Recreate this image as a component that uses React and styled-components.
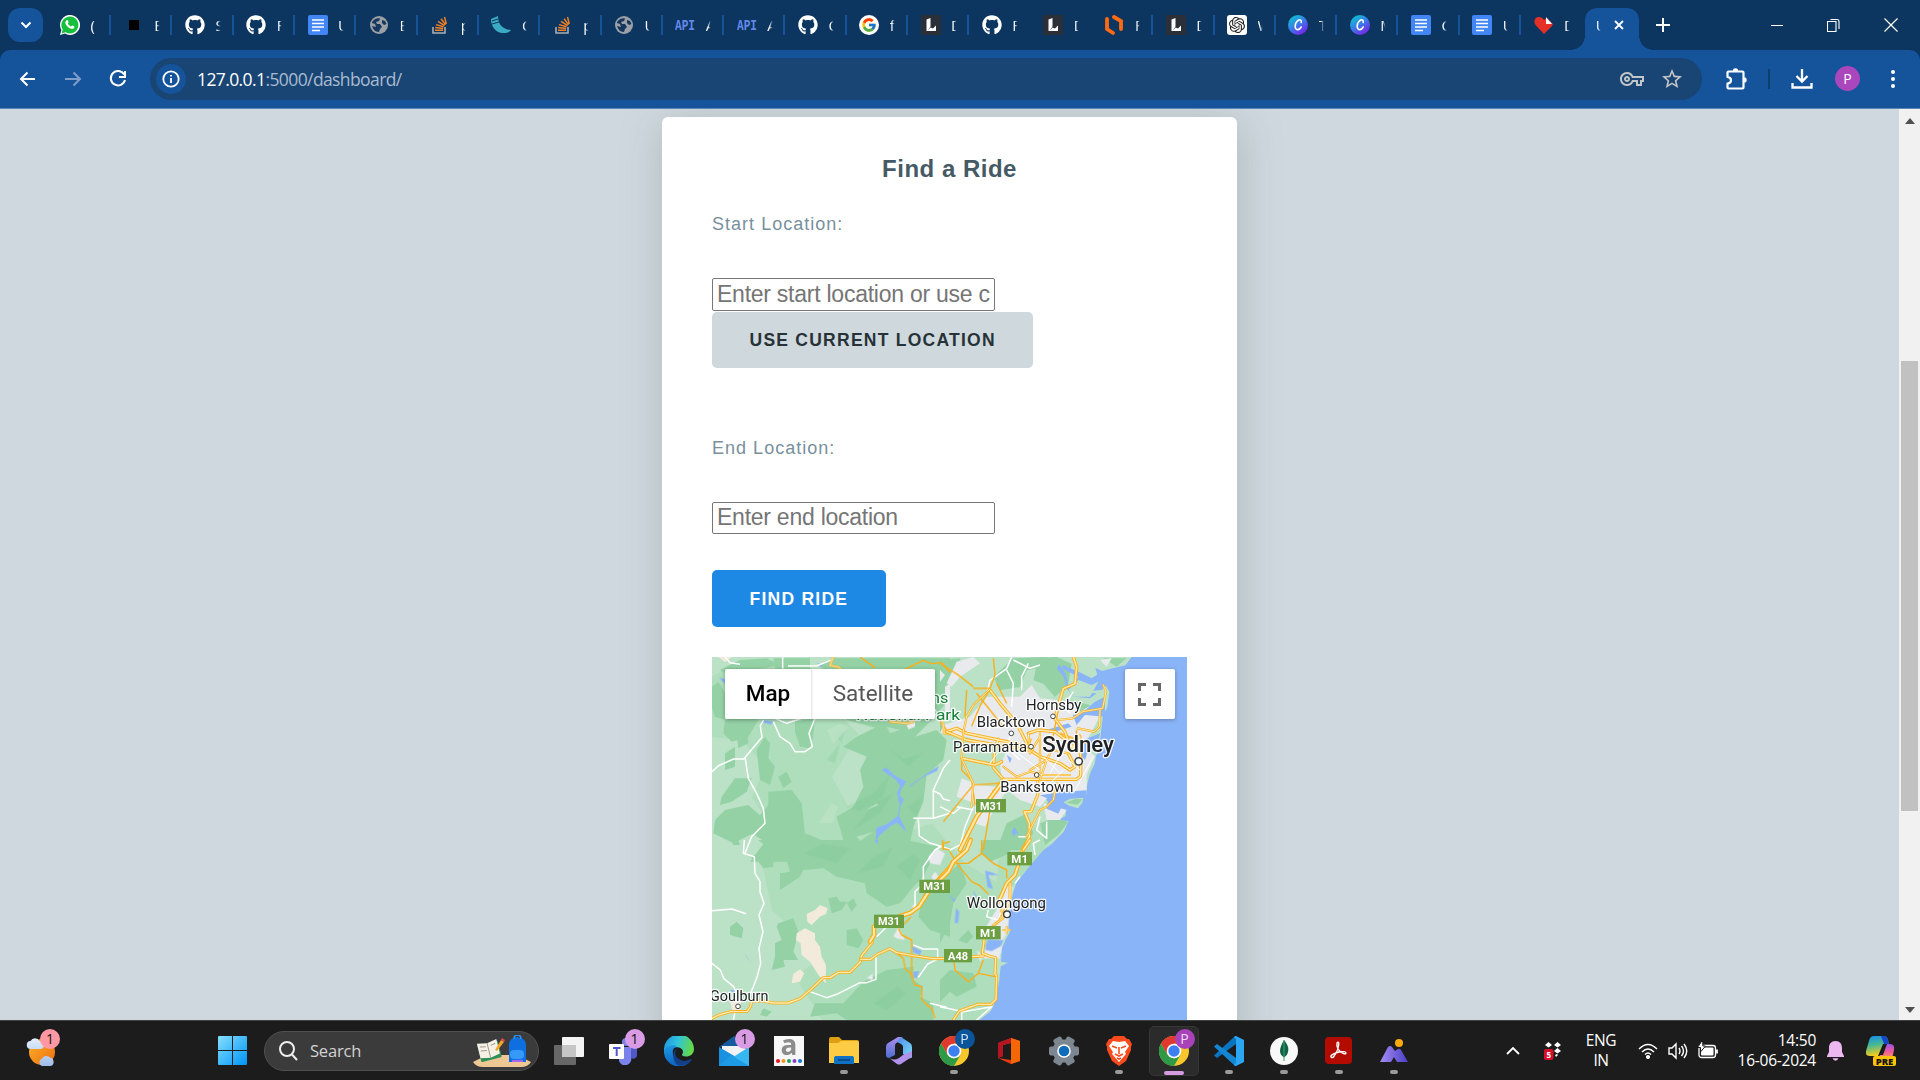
import React from 'react';
import styled, { createGlobalStyle, css } from 'styled-components';
import { FaGithub } from 'react-icons/fa';
import { FcGoogle } from 'react-icons/fc';
import { SiOpenai } from 'react-icons/si';
import { MdStarOutline, MdOutlineVpnKey } from 'react-icons/md';

const ui = '"Open Sans", "Noto Sans", sans-serif';
const arial = '"Liberation Sans", Arial, sans-serif';

const Global = createGlobalStyle`
  * { box-sizing: border-box; }
  body { margin: 0; overflow: hidden; background: #cfd8df; }
  svg { display: block; flex: none; }
`;

const Screen = styled.div`
  width: 1920px;
  height: 1080px;
  display: flex;
  flex-direction: column;
  overflow: hidden;
  font-family: ${ui};
`;

/* ---------- browser ---------- */
const TabStrip = styled.header`
  height: 50px;
  flex: none;
  display: flex;
  align-items: center;
  padding-left: 8px;
  background: #0c3560;
`;
const TabSearch = styled.div`
  width: 35px;
  height: 34px;
  border-radius: 12px;
  background: #15539b;
  display: grid;
  place-items: center;
  margin-right: 5px;
`;
const Tab = styled.div`
  width: 61.3px;
  height: 20px;
  flex: none;
  display: flex;
  align-items: center;
  gap: 10.5px;
  padding-left: 12.5px;
  border-right: 2px solid ${(p) => (p.$bare ? 'transparent' : '#15539b')};
  &:nth-child(2) { width: 63.2px; padding-left: 11.5px; gap: 11px; }
`;
const Favicon = styled.span`
  width: 20px;
  height: 20px;
  flex: none;
  display: grid;
  place-items: center;
`;
const TabTitle = styled.span`
  width: 5.5px;
  overflow: hidden;
  color: #fff;
  font-size: 15px;
  line-height: 24px;
  mask-image: linear-gradient(90deg, #000 40%, transparent 95%);
`;
const ActiveTab = styled.div`
  width: 54px;
  height: 42px;
  margin: 8px 0 0 2.5px;
  flex: none;
  display: flex;
  align-items: center;
  gap: 12.5px;
  padding: 0 0 8px 11px;
  border-radius: 12px 12px 0 0;
  background: #15539b;
  position: relative;
  &::before, &::after {
    content: '';
    position: absolute;
    bottom: 0;
    width: 14px;
    height: 14px;
  }
  &::before { left: -14px; background: radial-gradient(circle at 0 0, transparent 13.5px, #15539b 14px); }
  &::after { right: -14px; background: radial-gradient(circle at 100% 0, transparent 13.5px, #15539b 14px); }
`;
const NewTab = styled.div`
  margin-left: 17px;
  flex: 1;
`;
const WindowButtons = styled.div`
  display: flex;
  width: 172px;
  padding: 0 22px 0 22px;
  justify-content: space-between;
  align-items: center;
`;
const ToolbarBack = styled.div`
  flex: none;
  background: #0c3560;
`;
const Toolbar = styled.div`
  height: 59px;
  display: flex;
  align-items: center;
  padding: 0 16px 1px 16px;
  background: #15539b;
  border-radius: 10px 10px 0 0;
  border-bottom: 1px solid #5c86b8;
  color: #fff;
`;
const NavButtons = styled.div`
  display: flex;
  gap: 21px;
  width: 134px;
`;
const AddressBar = styled.div`
  width: 1552px;
  height: 42px;
  border-radius: 21px;
  background: #194574;
  display: flex;
  align-items: center;
  padding: 0 18px 0 6px;
`;
const InfoBadge = styled.div`
  width: 30px;
  height: 30px;
  border-radius: 50%;
  background: #15539b;
  display: grid;
  place-items: center;
  margin-right: 11px;
`;
const Url = styled.div`
  flex: 1;
  font-size: 17.5px;
  letter-spacing: -0.6px;
  color: #a9bbd0;
  b { font-weight: 400; color: #fff; }
`;
const AddressActions = styled.div`
  display: flex;
  align-items: center;
  gap: 16px;
  color: #c3c5c7;
`;
const ToolbarActions = styled.div`
  flex: 1;
  display: flex;
  align-items: center;
  padding-left: 24px;
`;
const Rule = styled.span`
  width: 2px;
  height: 20px;
  background: #0e3d70;
  margin: 0 21px 0 20px;
`;
const Avatar = styled.span`
  width: 25px;
  height: 25px;
  border-radius: 50%;
  background: #ab47bc;
  color: #fff;
  font-size: 14px;
  display: grid;
  place-items: center;
  margin: 0 31px 0 22px;
`;

/* ---------- page ---------- */
const Viewport = styled.div`
  flex: 1;
  min-height: 0;
  display: flex;
  overflow: hidden;
`;
const Page = styled.main`
  flex: 1;
  background: #cfd8df;
  display: flex;
  justify-content: center;
  padding-top: 8px;
  overflow: hidden;
`;
const Card = styled.section`
  width: 575px;
  height: 1100px;
  padding: 32px 50px;
  background: #fff;
  border-radius: 6px;
  box-shadow: 2px 6px 42px rgba(119, 130, 119, 0.36);
  font-family: ${arial};
  display: flex;
  flex-direction: column;
  align-items: flex-start;
`;
const Heading = styled.h2`
  align-self: stretch;
  margin: 0;
  text-align: center;
  font-size: 24px;
  line-height: 40px;
  letter-spacing: 0.5px;
  color: #455a64;
`;
const Label = styled.label`
  margin-top: ${(p) => p.$top}px;
  font-size: 18px;
  line-height: 24px;
  letter-spacing: 1.02px;
  color: #78909c;
`;
const Field = styled.input`
  margin: 42px 0 0;
  width: 283px;
  height: ${(p) => p.$h}px;
  padding: 0 3px 1px 4px;
  border: 1px solid #767676;
  border-radius: 2px;
  font-family: ${arial};
  font-size: 23px;
  letter-spacing: -0.25px;
  background: #fff;
  &::placeholder { color: #757575; }
`;
const Button = styled.button`
  margin: ${(p) => p.$top}px 0 0;
  padding: ${(p) => (p.$primary ? 1 : 0)}px 37.5px 0;
  width: ${(p) => p.$w}px;
  height: ${(p) => p.$h}px;
  border: 0;
  border-radius: 5px;
  font: 700 17.5px ${arial};
  letter-spacing: 1.25px;
  text-align: left;
  white-space: nowrap;
  ${(p) => p.$primary
    ? css`background: #1e88e5; color: #fff;`
    : css`background: #cfd8dc; color: #263238;`}
`;
const MapBox = styled.div`
  position: relative;
  margin-top: 30px;
  width: 475px;
  height: 500px;
  background: #8ab4f8;
  overflow: hidden;
  font-family: Roboto, sans-serif;
`;
const MapControls = styled.div`
  position: absolute;
  inset: 12px 12px auto 13px;
  display: flex;
  justify-content: space-between;
`;
const MapTypes = styled.div`
  display: flex;
  height: 50px;
  width: 210px;
  background: #fff;
  border-radius: 2px;
  box-shadow: 0 1px 4px rgba(0, 0, 0, 0.3);
`;
const MapType = styled.div`
  width: ${(p) => p.$w}px;
  font-size: 22.5px;
  line-height: 48px;
  text-align: center;
  font-weight: ${(p) => (p.$on ? 500 : 400)};
  color: ${(p) => (p.$on ? '#000' : '#565656')};
  box-shadow: ${(p) => (p.$on ? '1px 0 2px rgba(0,0,0,.13)' : 'none')};
`;
const Fullscreen = styled.div`
  width: 50px;
  height: 50px;
  background: #fff;
  border-radius: 2px;
  box-shadow: 0 1px 4px rgba(0, 0, 0, 0.3);
  display: grid;
  place-items: center;
`;
const Scrollbar = styled.div`
  width: 21px;
  background: #f1f1f1;
  display: flex;
  flex-direction: column;
  align-items: center;
  padding: 9px 0 7px;
`;
const Thumb = styled.div`
  width: 17px;
  height: 450px;
  margin: 237px 0 auto;
  background: #c1c1c1;
`;

/* ---------- taskbar ---------- */
const Taskbar = styled.footer`
  height: 60px;
  flex: none;
  display: flex;
  align-items: center;
  background: #1c1c1c;
  border-top: 1px solid #3f4242;
  color: #fff;
`;
const AppSlot = styled.div`
  width: 55px;
  height: 59px;
  flex: none;
  display: grid;
  place-items: center;
  position: relative;
  &::after {
    content: '';
    position: absolute;
    bottom: ${(p) => (p.$active ? 5 : 6)}px;
    left: 50%;
    transform: translateX(-50%);
    height: 4px;
    border-radius: 2px;
    width: ${(p) => (p.$active ? 20 : p.$open ? 8 : 0)}px;
    background: ${(p) => (p.$active ? '#d59be0' : '#9a9a9a')};
  }
`;
const Weather = styled(AppSlot)`
  width: 205px;
  place-items: center start;
  padding-left: 25px;
`;
const Plate = styled.div`
  width: 50px;
  height: 50px;
  border-radius: 5px;
  display: grid;
  place-items: center;
  ${(p) => p.$on && css`background: #2b2b2b; border: 1px solid #363636;`}
`;
const Badge = styled.span`
  position: absolute;
  left: ${(p) => p.$x}px;
  top: 8px;
  width: 20px;
  height: 20px;
  border-radius: 50%;
  background: ${(p) => p.$bg};
  color: ${(p) => p.$fg || '#111'};
  font-size: 14px;
  line-height: 20px;
  text-align: center;
`;
const Search = styled.div`
  width: 275px;
  height: 40px;
  margin: 0 2px 0 4px;
  border-radius: 20px;
  border: 1px solid #505050;
  background: #3b3b3b;
  display: flex;
  align-items: center;
  padding: 0 7px 0 14px;
  gap: 12px;
  font-size: 16.5px;
  letter-spacing: -0.2px;
  color: #d2d2d2;
  span { flex: 1; }
`;
const Tray = styled.div`
  margin-left: auto;
  width: 416px;
  height: 59px;
  display: flex;
  align-items: center;
`;
const TrayItem = styled.div`
  margin-left: ${(p) => p.$ml}px;
`;
const TrayText = styled.div`
  width: ${(p) => p.$w}px;
  margin: 0 ${(p) => p.$mr}px 0 ${(p) => p.$ml}px;
  font-size: 15.5px;
  line-height: 20px;
  letter-spacing: ${(p) => p.$ls || -0.4}px;
  text-align: ${(p) => p.$align};
  white-space: nowrap;
  padding-bottom: 2px;
`;

/* ---------- favicons ---------- */
const Docs = () => (
  <svg width="20" height="20"><rect width="20" height="20" rx="2" fill="#4285f4" /><path d="M4 5h12M4 8.500h12M4 12h12M4 15.500h8" stroke="#fff" strokeWidth="1.700" /></svg>
);
const Globe = () => (
  <svg width="18" height="18" viewBox="0 0 18 18"><circle cx="9" cy="9" r="9" fill="#9aa0a6" /><path d="M2 6c3-4 6-4 8-3.500L9 5 6 6l1 2h3l2 3-2 2-1 3c-4 0-6-3-7-6l4 1-1-3-3-1zM12 4l3 1 1.500 3-2.500 1-2-2z" fill="#15365d" /></svg>
);
const Wa = () => (
  <svg width="20" height="20" viewBox="0 0 20 20"><path d="M0 20 1.400 15A10 10 0 1 1 5 18.600z" fill="#fff" /><path d="M1.600 18.400 2.700 14.600A8.500 8.500 0 1 1 5.500 17.300z" fill="#17bf3d" /><path d="M6.400 5.500c.5-.6 1.300-.6 1.500 0l.7 1.600c.2.5-.6 1-.7 1.400.6 1.400 1.700 2.400 3.200 3 .5-.2.9-1 1.400-.9l1.800.9c.4.4-.1 1.500-.7 2-1.200.8-3.500.2-5.300-1.300C6.500 10.700 5 8.500 5.300 7.200z" fill="#fff" /></svg>
);
const Flask = () => (
  <svg width="20" height="20" viewBox="0 0 20 20"><path d="M0 4 7 1c0 5 2 10 6 12 3 1.500 5 2 7 2-1 2-5 3.500-9 3C4 17 0 11 0 4z" fill="#3babc3" /><path d="M1 6l6-2M1 9l7-2" stroke="#0c3560" /></svg>
);
const Api = () => (
  <svg width="21" height="16" viewBox="0 0 21 16"><text x="0" y="13" textLength="20" lengthAdjust="spacingAndGlyphs" fontFamily="Liberation Mono, monospace" fontWeight="700" fontSize="15.500" fill="#6488ea">API</text></svg>
);
const Google = () => (
  <svg width="20" height="20" viewBox="0 0 20 20"><circle cx="10" cy="10" r="10" fill="#fff" /><FcGoogle x="2" y="2" size={16} /></svg>
);
const Lin = () => (
  <svg width="20" height="20" viewBox="0 0 20 20"><rect width="20" height="20" fill="#2b2f38" /><path d="M5.500 4.500 9.500 3v8.500l-3 4.500h-1zM6.500 16l3-3.500 2.500 1 3-3v5.500z" fill="#fff" /></svg>
);
const Orange = () => (
  <svg width="20" height="20" viewBox="0 0 20 20" fill="none" stroke="#ff6a13" strokeWidth="3.800" strokeLinecap="round"><path d="M3 4v10l6 4M10 2l7 4v8" /></svg>
);
const Gpt = () => (
  <svg width="20" height="20" viewBox="0 0 20 20"><rect width="20" height="20" rx="3" fill="#fff" /><SiOpenai x="2" y="2" size={16} color="#222" /></svg>
);
const Canva = () => (
  <svg width="20" height="20" viewBox="0 0 20 20"><defs><linearGradient id="cv" x2=".7" y2="1"><stop offset=".1" stopColor="#08c6cf" /><stop offset=".55" stopColor="#3a7be8" /><stop offset="1" stopColor="#7a22ea" /></linearGradient></defs><circle cx="10" cy="10" r="10" fill="url(#cv)" /><path d="M13.200 7.500c.7-2.500-1.600-3.500-3.700-1.700-2.600 2.300-3.300 7.800-.6 8.700 1.800.5 3.300-.8 4.300-2.500" fill="none" stroke="#fff" strokeWidth="1.600" strokeLinecap="round" /></svg>
);
const Heart = () => (
  <svg width="20" height="20" viewBox="0 0 20 20"><path d="M10 19 1.500 10C-1 6 1 2 5 2c2 0 4 1 5 3 1-1 2-2 4-1l5 5-1 2z" fill="#e53027" /><path d="M12 2v7h6z" fill="#fff" /></svg>
);
const Square = () => <svg width="10" height="10"><rect width="10" height="10" /></svg>;
const Gh = () => <FaGithub size={20} color="#fff" />;
const So = () => (
  <svg width="18" height="18" viewBox="0 0 18 18" fill="none"><path d="M2 11v6h12v-6" stroke="#a9adb0" strokeWidth="1.600" /><path d="M4 14.300h8M4.200 11.600l8 .9M5 8.600l7.500 2.200M7 5.300l6.600 4.300M10 2.700l4.600 6M13.500 1l1.800 7" stroke="#f08025" strokeWidth="1.500" /></svg>
);

const tabs = [
  [Wa, '('], [Square, 'E'], [Gh, 'S'], [Gh, 'F'], [Docs, 'U'], [Globe, 'E'], [So, 'p'], [Flask, 'C'],
  [So, 'p'], [Globe, 'U'], [Api, 'A'], [Api, 'A'], [Gh, 'C'], [Google, 'f'], [Lin, 'D'], [Gh, 'F', true],
  [Lin, 'D', true], [Orange, 'F'], [Lin, 'D'], [Gpt, 'W'], [Canva, 'T'], [Canva, 'M'], [Docs, 'C'],
  [Docs, 'U'], [Heart, 'D', true],
];

/* ---------- map ---------- */
const NW = 'translate(-36 -21)';
const NE = 'translate(684 -21)';
const SW = 'translate(-36 549)';
const SE = 'translate(684 549)';

const Highway = ({ d, w = 9 }) => (
  <g fill="none" strokeLinejoin="round" strokeLinecap="round">
    <path d={d} stroke="#fbae17" strokeWidth={w} />
    <path d={d} stroke="#fdeaaf" strokeWidth={w * 0.45} />
  </g>
);
const Shield = ({ x, y, w, children }) => (
  <g>
    <rect x={x} y={y} width={w} height="40" fill="#6c9f42" />
    <text x={x + w / 2} y={y + 32} textAnchor="middle" fontSize="34" fontWeight="700" fill="#fff" textLength={w - 24} lengthAdjust="spacingAndGlyphs">{children}</text>
  </g>
);
const Place = ({ x, y, w, size = 46, weight = 400, fill = '#202124', children }) => (
  <text x={x} y={y} textLength={w} lengthAdjust="spacingAndGlyphs" fontSize={size} fontWeight={weight} fill={fill} stroke="#fff" strokeOpacity=".85" strokeWidth="8" strokeLinejoin="round" paintOrder="stroke">{children}</text>
);
const Town = ({ x, y, r = 7 }) => <circle cx={x} cy={y} r={r} fill="#fff" stroke="#3c4043" strokeWidth={r / 2.4} />;

const MapDrawing = () => (
  <svg width="475" height="363" viewBox="0 0 1425 1089" fontFamily="Roboto, sans-serif">
    <path fill="#bbe2c6" d="M0 0H1259L1240 25 1205 33 1170 42 1150 32 1158 62 1180 82 1192 104 1186 150 1172 180 1166 235 1160 280 1152 297 1148 320 1134 350 1126 380 1122 414 1090 405 1062 408 1020 412 990 418 1028 450 1062 462 1060 478 1034 490 1070 492 1055 524 1020 560 994 579 970 597 952 625 935 650 914 675 902 710 897 738 889 780 887 808 894 824 880 850 869 875 867 914 888 917 866 928 862 969 854 1010 844 1048 834 1064 802 1089H0Z" />

    <g fill="#aedebb">
      <path d="M0 60 60 20 200 10 330 50 360 150 440 230 360 360 470 560 660 500 760 620 880 690 855 880 852 1000 840 1045 800 1089 330 1089 250 960 330 900 250 800 190 700 210 560 120 420 160 330 90 250 0 240Z" />
      <path d="M150 620 250 580 420 640 500 700 480 830 400 880 280 850 180 760Z" />
      <path d="M860 590 980 500 1010 560 900 690 850 760Z" />
    </g>
    <g fill="#94d2a5">
      <g transform={NW}>
        <path d="M55 95 76 130 75 210 45 200 36 175V110ZM75 210l60-15 40 15-30 50-50 15-25-25ZM110 250l30-10 5 40-30 15ZM75 310l30-20 0 60-30 10ZM60 60l60-30 80-5 40 20-80 15-60 25ZM170 300l25-40 15 20-5 45 20 25-15 55-30-15ZM235 380l25-15 15 30-25 20ZM105 385l50 0-15 40-45 30-35 10 5-25ZM45 510l30-30 70-15 40 35-25 50-60 30-60-30Z" />
        <path d="M285 215l60-10-5 50-10 40-30-5-15-45ZM230 75l70 10 30-20 0-40H220ZM390 95l-30-50 40-20h350v120l-60 70-60 60-80-35-110-30Z" />
        <path d="M430 290l40-30 60-30 40 0 60 35 80-25 30 30-10 60-50 45-10 80-25 60-30 120-75 0H150l45-60-40-25 25-55 25-30 0-40 70-5 30 40 10 90 50 20 25 30 40-30-20-70 50-30 30-60-10-50 20-40Z" />
      </g>
      <g transform={SW}>
        <path d="M175 0H620L715 20 690 70 670 110 640 140 600 190 560 200 500 160 495 130 410 110 370 85 310 90 300 110 240 150 240 100 270 95 260 60 220 50 205 25ZM95 0h20l5 15-20 0ZM150 50l30-10 15 10 25-5 0 35-30 5-15-20ZM235 250l45-15 15 40-15 60 15 25-45 0 5 20-40 10 10-40 0-40 20-10-15-40ZM90 260l20-15 20 20-5 30-35-10ZM440 270l30-5 20 35-15 25-35-10ZM385 175l25-5 10 15 20 0-15 25-30 10ZM440 190l20-15 10 20-15 20ZM335 370l30-10 10 20-20 25ZM670 160l80-20 0 150-60-20-35-40Z" />
        <path d="M490 425 560 390 640 380 640 420 670 440 660 470 700 490 700 540H440L410 520 330 530 345 490 430 490ZM190 505l25 10-15 15-20-5Z" />
      </g>
      <g transform={NE}>
        <path d="M0 30 60 25 65 60 0 90ZM160 80l60-55 100-4-10 30-50 10-20 50-60 10ZM295 25l55-4 45 20-10 60-40 40-35-40-30-10ZM340 190l50-40 80 20-40 60-60 40-20-40ZM0 210l20 30-20 15ZM200 520l60-30 20 60-40 50-70 0ZM300 520l40-15 45 10-30 40-40 30ZM490 25l70 0-30 25Z" />
      </g>
      <g transform={SE}>
        <path d="M130 0l90 0-10 40-60 25-30-30ZM0 120l60-50 20 60-40 60-10 60-30 60ZM0 420l30-30 70 10 10 40-60 30-20-15-30 30ZM55 300l30-30 15 20-20 20Z" />
      </g>
    </g>
    <g fill="#7fc693" opacity=".28">
      <g transform={NW}><path d="M440 470l80-40 50-60-20 70-70 45ZM460 540l60-80 60-30-40 60ZM560 290l50 35 60-15-45 40ZM620 470l50-30-20 60ZM400 250l35-20-10 50ZM380 330l40-50-15 60Z" /></g>
      <g transform={SW}><path d="M310 40l60-30 80 15-40 45ZM470 100l50-50 60-30-30 60ZM590 80l50-40 20 20-30 60ZM520 490l70-50 30 20-60 50Z" /></g>
    </g>
    <g fill="#bbe2c6" opacity=".8" transform={NW}>
      <path d="M355 520l40-60 20 10-15 50ZM500 480l30-20 5 6ZM560 230l40 10-30 10ZM470 560l50-15-40 28ZM380 240l40-18 25 10-45 50Z" />
    </g>

    <g fill="#e8eaed">
      <g transform={NE}>
        <path d="M50 35 100 21 120 40 60 80 35 110 20 100ZM90 200 140 140 240 140 275 105 300 145 400 155 420 185 480 150 485 190 430 290 465 318 440 375 440 433 400 425 330 435 300 470 240 450 190 410 180 350 200 300 80 260 0 250 10 225ZM65 385l50 20 90 10-40 60-30 55-30-10 0-60-55-20ZM310 460l70 20-20 30-40 0ZM480 30l35-5-15 25ZM0 60l15 15-15 20Z" />
      </g>
      <g transform={NW}><path d="M620 225l25-10 0 15-20 8ZM735 110l15-10 0 110-15-10Z" /></g>
      <g transform={SW}><path d="M685 50l25-25 25 15-15 35-30-5ZM695 110l10-15 15 20-20 15ZM580 290l15-30 20 40-25-5ZM500 415l18-15 0 20ZM635 200l10-10 0 20Z" /></g>
      <g transform={SE}><path d="M203 135l15 5-5 50-5 35-5 50-15 25-5 40-30-5-5-40-10-35 30-50ZM135 330l45-10 0 35-50 0ZM0 40l10 5-10 20ZM110 330l20 20-10 15Z" /></g>
    </g>
    <g fill="#f2ebdc">
      <path transform={SW} d="M320 222 345 210 360 195 383 205 378 222 360 230 335 255 322 245ZM290 280 315 265 345 280 345 300 360 320 365 350 378 375 377 430 355 405 330 365 305 345 302 310 288 300ZM280 402 300 388 313 400 300 425 275 430Z" />
      <path transform={NW} d="M55 21h40l-20 15Z" />
      <path transform={SW} d="M90 482l32 0 0 35-25-5Z" />
    </g>
    <g fill="#8ab4f8">
      <path transform={NW} d="M545 360l15-8 25 25 35 18-18 25-2 18 12 10-10 20-5 30 15 30 10 20-30-30-20 10-35 30-10 20 2-45 30-10 35-25 5-35-8-35 10-20-15-20ZM628 408l60-42 28-18-5 15-40 18-42 30ZM57 84l20 3 0 16ZM185 210l35 5-8 8-20-5ZM350 38l18 8-6 6Z" />
      <path transform={SW} d="M635 318l30 15-5 12-20-8ZM640 395l18-2-8 20-10 2ZM135 342l18 28-14-20ZM525 0h10l-2 15ZM90 450l20 0-10 10Z" />
      <path transform={SE} d="M137 315 145 298 190 300 183 318 155 333 138 330ZM135 92l8 50 16 5-14-42 30 0-20-8ZM25 165l22 15-6 5ZM48 205l10 10-4 35-10-2ZM100 150l10 20-5 4Z" />
      <path transform={NE} d="M455 85l30-20 50 0 0 60-30-25-20 20-60 5-30-15 20-30-50-25 5-10 55 25ZM375 110l20-10 15 25 60 5-20 15-50-5ZM465 155l30-15 0 60-60-5-25 30-12-30 30-8ZM330 250l-10-10 65-20 10 10ZM395 290l35-20 50-20-10 45 -25 5-10 30-12-15ZM300 436l65-10 75-5 0 20-65 10-20 40-35-15 5-30ZM200 315l15 10-5 15ZM215 545l8-15 15 25-10-5-8 10Z" />
      <path transform={NE} d="M350 55l8-12 20 30 8 40-8-4-8-30Z" />
    </g>
    <path transform={NE} fill="#bbe2c6" d="M385 120l30-30 40 15 20-10-25 45-50 0ZM370 457l20-10 40-4-2 14-14 18-26-8Z" />
    <path transform={NE} fill="#94d2a5" d="M378 458l30-12 20 2-16 16Z" />

    <g fill="none" stroke="#fff" strokeWidth="4.500" strokeLinejoin="round">
      <path transform={NW} d="M75 21l15 17 30 5M264 48h85l50-20M248 21v35M36 365l20-18 45-20h30l55-65-5-35 10-17M135 320l10 65 25 45 20 45 5 45-40 40-20 50M220 215l20 45 30 20 15 25h30l22-15-10-40 18-45M225 205l35 15 45-15M750 330l-20 25-30 65 0 85M640 505h60l50-15M655 508l3 50 30 20 62 20M700 422l20 10 10 15 20 5" />
      <path transform={SW} d="M133 0l-3 40 33 10 2 50 15 25 0 30 12 35-15 35 12 50-12 50 5 45-12 45-20 50M36 212l60-5 42 14M36 370l25 20 10 25 30 25 20 45M330 455l50 18 30-10 70-35 20 0 28-10V350M645 205v-50l25-25 0-50 35-50 20-12M640 315l30 12h43v30l-30 15-28 40M690 490l50 12M105 515l-5 25M530 290l30-30" />
      <path transform={SE} d="M30 30l50-25M145 210l-5 20 35 10 10-30-20-20M0 500l70 15 85-15-45 40M65 510l0 30M300 0l-20 10 5 35M225 130l15-20" />
      <path transform={NE} d="M215 21l-15 35-50 35-10 40M265 40l-20 40 0 40M50 470l50 10M0 470l40 20 25-20M300 500l-10 40 30 25 0-50M235 560l30 0M60 590l15-60 25-60M200 60l20 40-5 70M400 125l-30 45 20 20M180 200l-35 40M210 260l-10 30 40 40M220 30l50 25 30-10" />
    </g>

    <g fill="none" stroke="#fbae17" strokeWidth="4.200" strokeLinejoin="round">
      <path transform={NW} d="M480 21l45 32M615 58l30-15 25-12 25 10 30-3 25 30M750 575l-20 5 0 20" />
      <path transform={SW} d="M595 265l10 20 30 15 0 110 10 25 20 5 0 35 10 15 20 15 10 30M590 340l20 15 5 30 25 25M728 0l0 25 20 5M632 232l-20 20" />
      <path transform={SE} d="M30 35l20 35 35 0 40-30 0-40M125 40l35 30 40 20 0 25M50 70l45 55 25 12 25 25M40 350l5 40 40 35 30-25 50 10M130 360l-15 40" />
      <path transform={NE} d="M0 40l55 35 45 35M100 115l50 0 15-40-5-50M150 118l-30 50-25 60M80 120l-5 80M110 130l80 100M200 160l-30-60M0 215l20 25M65 330l0 30 30 30 10 75M180 400l-80 5 -90 110M160 420l-30 180M360 250l80 30M410 240l-5 60M355 180l-20 100" />
    </g>

    <g transform={NW}><Highway d="M400 21l-10 25 25 5 45 38" w={7} /><Highway d="M570 215l50 5 20-5M750 252l-18-3-5-40" w={7} /></g>
    <g transform={SW}>
      <Highway d="M36 535l20-10 35-10 50-1 10-12 5-22M156 482l34 1 30 6h45l35-13 30-25 40-38 20 0 25-16 35 0 30-30 5-20 32-40" />
      <Highway d="M510 305l12-20 0-25 80-32 30-10 25-18 35-55 60-65" w={14} />
      <Highway d="M482 358l30 0 20-15 38-17 20 12 50 9 60 9 60-1" />
    </g>
    <g transform={SE}>
      <Highway d="M0 120l25-25 15-30 40-35 12-30" w={14} />
      <Highway d="M265 0l-15 25-15 50-10 30-25 25-15 35-10 20" w={12} />
      <Highway d="M210 130l0 50-30 60-45 40-8 60 20 8 20 5 -2 50 5 5-2 70-15 15h-40l-55 20-20 30M95 350l35-2" w={9} />
      <Highway d="M180 200l10 35-30 20M190 270h20M200 260v20" w={6} />
    </g>
    <g transform={NE}>
      <Highway d="M60 600l50-100 70-95 10-15" w={14} />
      <Highway d="M400 21l10 30-5 50-35 15-15 50-10 40 30 40 15 40 15 15M190 388l-30-35 5-60 10-25M250 600l18-40 0-40-15-35 20 0 20-50 0-55M265 250l30-10 50 5 40 30 20 20M20 245l30-10 30 15 120 25 60 15 10-20" w={10} />
      <Highway d="M20 245l60 25 90 15 100 15 30 20 60 20 30 20 15-10-20-40M190 388h220l12-10 0-60-3-60M65 325l100 20 20-10M250 600l20-30M150 120l30 40 50 60 30 60" w={10} />
      <Highway d="M80 200l20-35 50-48M80 200l-10 45-5 80M65 325l20 45 15 30-5 70M490 105l8 20-10 50-60 10-30 20-45 5M480 180l-2 50-15 15-50-10M350 400l-10 50-20 20-20 10-40 80M265 250l5 60 30-50M300 250v120M270 360l50-30 15-30 50 10M190 350l40 30 40-15 40 10 80 0M320 330l-20 60" w={6.5} />
      <g fill="none" stroke="#fff" strokeWidth="3"><path d="M310 320l50 50M330 370l40-70M220 300l80 60M400 430l60-110M180 300l-30 40M385 330l35 30M330 400l40-40" /></g>
    </g>

    <Place x={480} y={137} w={229} fill="#188038">Mountains</Place>
    <Place x={432} y={188} w={312} fill="#188038">National Park</Place>
    <Place x={942} y={160} w={166}>Hornsby</Place>
    <Place x={794} y={211} w={206}>Blacktown</Place>
    <Place x={723} y={286} w={222}>Parramatta</Place>
    <Place x={991} y={286} w={215} size={65} weight={500}>Sydney</Place>
    <Place x={865} y={405} w={219}>Bankstown</Place>
    <Place x={764} y={752} w={238}>Wollongong</Place>
    <Place x={-6} y={1031} w={175}>Goulburn</Place>
    <Town x={1023} y={178} /><Town x={898} y={229} /><Town x={957} y={269} /><Town x={974} y={354} />
    <Town x={1100} y={313} r={11} /><Town x={885} y={772} r={10} /><Town x={78} y={1048} />
    <Shield x={792} y={426} w={90}>M31</Shield>
    <Shield x={886} y={585} w={74}>M1</Shield>
    <Shield x={622} y={668} w={92}>M31</Shield>
    <Shield x={486} y={773} w={90}>M31</Shield>
    <Shield x={792} y={807} w={74}>M1</Shield>
    <Shield x={696} y={876} w={84}>A48</Shield>
  </svg>
);

/* ---------- taskbar icons ---------- */
const Chrome = () => (
  <svg width="30" height="30" viewBox="0 0 30 30">
    <circle cx="15" cy="15" r="15" fill="#f9c72c" />
    <path d="M15 15 8.500 18.700 2 7.500A15 15 0 0 1 28 7.500H15z" fill="#e0392f" />
    <path d="M2 7.500 8.500 18.700 15 22.500 21.500 18.700 15 30A15 15 0 0 1 2 7.500z" fill="#2e9a47" />
    <circle cx="15" cy="15" r="7.300" fill="#fff" /><circle cx="15" cy="15" r="5.700" fill="#3b7ff0" />
  </svg>
);
const Windows = () => (
  <svg width="29" height="29" viewBox="0 0 29 29"><defs><linearGradient id="wi" gradientUnits="userSpaceOnUse" x1="0" y1="0" x2="29" y2="29"><stop stopColor="#84e0fc" /><stop offset="1" stopColor="#0093f8" /></linearGradient></defs><path fill="url(#wi)" d="M1 0h13v14H0V1q0-1 1-1zM15 0h13q1 0 1 1v13H15zM0 15h14v14H1q-1 0-1-1zM15 15h14v13q0 1-1 1H15z" /></svg>
);
const WeatherIcon = () => (
  <svg width="34" height="32" viewBox="0 0 34 32"><defs><linearGradient id="su" x2="1" y2="1"><stop stopColor="#fbb429" /><stop offset="1" stopColor="#ee6c11" /></linearGradient><linearGradient id="cl" x2="0" y2="1"><stop stopColor="#e4effd" /><stop offset="1" stopColor="#9fbce9" /></linearGradient></defs><circle cx="17" cy="17" r="13" fill="url(#su)" /><path d="M6 14a4 4 0 0 1-.5-8 5 5 0 0 1 9 0 4 4 0 0 1 1 8zM17 31a4 4 0 0 1 0-7.500 5 5 0 0 1 8-1 4.500 4.500 0 0 1 1 8.500z" fill="url(#cl)" /></svg>
);
const TaskView = () => (
  <svg width="30" height="28" viewBox="0 0 30 28"><rect y="8" width="22" height="20" rx="1" fill="#676767" /><rect x="8" width="22" height="20" rx="1" fill="#f4f4f4" /><rect x="8" y="8" width="14" height="12" fill="#c6c6c6" /></svg>
);
const Teams = () => (
  <svg width="30" height="28" viewBox="0 0 30 28"><circle cx="17" cy="5" r="4" fill="#7b83eb" /><circle cx="25" cy="6" r="3" fill="#5059c9" /><path d="M10 10h12v10a6 6 0 0 1-12 4z" fill="#7b83eb" /><path d="M22 10h6v9a4 4 0 0 1-6 2z" fill="#5059c9" /><rect y="7" width="15" height="15" rx="1" fill="#fff" /><path d="M4 11h7.500M7.700 11v8" stroke="#5059c9" strokeWidth="2" /></svg>
);
const Edge = () => (
  <svg width="30" height="30" viewBox="0 0 30 30"><defs><linearGradient id="e1" x2="1" y2=".2"><stop stopColor="#1e8fe0" /><stop offset=".5" stopColor="#30c4dc" /><stop offset="1" stopColor="#62d84d" /></linearGradient><linearGradient id="e2" x2=".3" y2="1"><stop stopColor="#1c9be8" /><stop offset="1" stopColor="#0d62bc" /></linearGradient></defs><path d="M0 14A15 15 0 0 1 30 13c0 5-4 7.500-8 7.500-3 0-4-1-4-2 2-2 1-6-3-7-6-1-13 2-15 7z" fill="url(#e1)" /><path d="M0 15c2-5 8-7 13-5-5 2-5 7-3 11 3 5 10 6 18 2A15 15 0 0 1 0 15z" fill="url(#e2)" /><path d="M13 12c-3 4-2 9 2 11 4 3 8 2 13 0-4 6-10 8-14 6-6-3-6-14-1-17z" fill="#123f86" /></svg>
);
const Mail = () => (
  <svg width="30" height="30" viewBox="0 -2 30 30"><path d="M0 9 15-2 30 9z" fill="#155a9e" /><path d="M3 8h24v10H3z" fill="#f2f2f4" /><path d="M0 9 17 19 0 28z" fill="#1a90e0" /><path d="M30 9v19H0z" fill="#35b8f1" /><path d="M0 28l12-11 18 11z" fill="#1e9be5" /></svg>
);
const Amazon = () => (
  <svg width="30" height="30" viewBox="0 0 30 30"><rect width="30" height="30" fill="#f7f7f7" /><text x="15" y="18.500" textAnchor="middle" fontFamily="Open Sans, sans-serif" fontWeight="700" fontSize="28" fill="#8c8c8c">a</text>{['#e81123', '#f7941d', '#1aa260', '#8a3fc9', '#1577d6'].map((c, i) => <circle key={c} cx={4 + i * 5.5} cy="25" r="2" fill={c} />)}</svg>
);
const Folder = () => (
  <svg width="30" height="27" viewBox="0 0 30 27"><path d="M0 2q0-2 2-2h8l3 3h15q2 0 2 2v6H0z" fill="#dea013" /><path d="M0 6h9l3-2h16q2 0 2 2v20H0z" fill="#fecb45" /><path d="M5 27v-6q0-2 2-2h16q2 0 2 2v6z" fill="#0f72c4" /><path d="M9 23h12" stroke="#0a3f78" strokeWidth="1.500" /></svg>
);
const M365 = () => (
  <svg width="26" height="28" viewBox="0 0 26 28"><defs><linearGradient id="m3" x2="1" y2="1"><stop stopColor="#4c8bea" /><stop offset="1" stopColor="#7bdcf8" /></linearGradient><linearGradient id="m4" x2="0" y2="1"><stop stopColor="#b08df0" /><stop offset="1" stopColor="#4c6fd0" /></linearGradient></defs><path d="M12 0 2 6Q0 7 0 10v8q0 3 3 3l6-3V9q0-3 3-4l5-4q-3-2-5-1z" fill="url(#m4)" /><path d="M15 0l9 6q2 1 2 4v10q-1 2-3 1l-6-4v-7q0-2-2-3l-4-2z" fill="url(#m3)" /><path d="M3 21l8 6q2 1 4 0l9-6q2-1 2-4v-3l-9 4-4 3q-5 3-10 0z" fill="#b191ea" /></svg>
);
const Office = () => (
  <svg width="22" height="26" viewBox="0 0 22 26"><path d="M13 0 0 5v15l5-2V7l8-2v17L0 20l13 6 9-3V3z" fill="#e33b10" /><path d="M13 0 0 5v15l5-2V7l8-2z" fill="#b51522" /><path d="M13 0l9 3v20l-9 3z" fill="#f56706" /></svg>
);
const Gear = () => (
  <svg width="30" height="30" viewBox="-15 -15 30 30"><g fill="#7d8791">{[0, 60, 120].map((a) => <rect key={a} x="-4.500" y="-15" width="9" height="30" rx="2" transform={`rotate(${a + 30})`} />)}<circle r="11.500" /></g><circle r="6.800" fill="#fff" /><circle r="5.300" fill="#0f6cbd" /></svg>
);
const Brave = () => (
  <svg width="26" height="30" viewBox="0 0 26 30"><path d="M8 0h10l3 3h2l3 5-1 3 0 3-5 11-7 5-7-5L1 14V11L0 8l3-5h2z" fill="#fb4a1c" /><path d="M7 5l6 1 6-1 4 5-4 6 1 2-7 8-7-8 1-2-4-6z" fill="#fff" /><path d="M6 10l5 2M20 10l-5 2M13 11v7M9 18l4 2 4-2M11 22l2 1 2-1" stroke="#fb4a1c" strokeWidth="1.600" fill="none" /></svg>
);
const VsCode = () => (
  <svg width="30" height="30" viewBox="0 0 30 30"><path d="M22 8 3 22 0 19.500 20 1l2-1z" fill="#0b74c0" /><path d="M22 22 3 8 0 10.500 20 29l2 1z" fill="#1487d4" /><path d="M22 0l8 4v22l-8 4q-1.500 0-2-1l2-2V3l-2-2q.5-1 2-1z" fill="#2aa6f2" /></svg>
);
const Mongo = () => (
  <svg width="28" height="28" viewBox="0 0 28 28"><circle cx="14" cy="14" r="14" fill="#f8f8f8" /><path d="M14 3c4 5 5 8 4 12-.5 2.500-2 4-4 5.500-2-1.500-4-3-4-6.500 0-4 2-7 4-11z" fill="#116149" /><path d="M14 3v21" stroke="#3da76a" /></svg>
);
const Acrobat = () => (
  <svg width="27" height="27" viewBox="0 0 27 27"><rect width="27" height="27" rx="4" fill="#b30b00" /><path d="M6 20c-1-2 4-4 8-5 4-.7 7-.5 7 1s-3 1-5-1c-3-2-4.500-6-4-9 .5-1.500 2-1 1.800 1-.3 4-3 10-5 12.500-1 1.200-2.300 1.500-2.800.5z" fill="none" stroke="#fff" strokeWidth="1.400" /></svg>
);
const Mountain = () => (
  <svg width="28" height="23" viewBox="0 0 28 23"><defs><linearGradient id="mo" x2="1"><stop stopColor="#a58df2" /><stop offset="1" stopColor="#4b3fc8" /></linearGradient></defs><path d="M0 23 8 8q2-2 4 0l3 4 3-2q2-1 3 1l7 12H17l-3-5-3 5z" fill="url(#mo)" /><circle cx="19" cy="4" r="4" fill="#ffab0a" /></svg>
);
const Desk = () => (
  <svg width="58" height="32" viewBox="0 0 58 32"><path d="M0 27 14 20h30l14 7q-3 5-10 5H10q-7 0-10-5z" fill="#efc795" /><g transform="rotate(-14 16 16)"><rect x="6" y="8" width="21" height="17" rx="1" fill="#2f8f58" /><path d="M6 6l10 2 10-2v15l-10 2-10-2z" fill="#f6f1e7" /><path d="M16 8v15M8 10l6 1M8 14l6 1M19 11l5-1" stroke="#a3998a" /></g><path d="M22 15l6-10 3 2-7 9z" fill="#f7a32c" /><path d="M28 5l1-2 3 2-1 2z" fill="#e64949" /><path d="M36 27V10q0-7 8-8 9 1 9 8v17z" fill="#0f6ee0" /><path d="M41 4q0-4 3.500-4T48 4" fill="none" stroke="#2e96f3" strokeWidth="1.500" /><rect x="37" y="15" width="14" height="9" rx="4" fill="#3599f8" /><path d="M39 26h11" stroke="#ad66eb" strokeWidth="2" /></svg>
);
const Copilot = () => (
  <svg width="30" height="30" viewBox="0 0 30 30"><defs><linearGradient id="c1" x2=".2" y2="1"><stop stopColor="#118bf0" /><stop offset=".5" stopColor="#49b990" /><stop offset="1" stopColor="#f2cc1d" /></linearGradient><linearGradient id="c2" x2="0" y2="1"><stop stopColor="#9c55ee" /><stop offset=".5" stopColor="#f05a9b" /><stop offset="1" stopColor="#f6a14b" /></linearGradient></defs><path d="M8 0h10q3 0 4 4l1 4h-6l-5 12H4q-5 0-4-5L3 5q1-5 5-5z" fill="url(#c1)" /><path d="M21 8h3q5 0 4 6l-2 9H12l2-4h3z" fill="url(#c2)" /><path d="M15 0h3q3 0 4 4l1 4h-5z" fill="#1747c8" /><rect x="7" y="20" width="23" height="10" rx="2" fill="#ffc40a" /><text x="18.500" y="28.500" textAnchor="middle" fontFamily="Open Sans, sans-serif" fontSize="9.500" fontWeight="800" fill="#111">PRE</text></svg>
);

const apps = [
  { I: TaskView }, { I: Teams, badge: ['1', '#d99be4'] }, { I: Edge }, { I: Mail, badge: ['1', '#d99be4'] },
  { I: Amazon }, { I: Folder, open: true }, { I: M365 }, { I: Chrome, open: true, badge: ['P', '#0a5599', '#cfe3f5'] },
  { I: Office }, { I: Gear }, { I: Brave, open: true }, { I: Chrome, active: true, badge: ['P', '#a742b8', '#eedcf2'] },
  { I: VsCode, open: true }, { I: Mongo, open: true }, { I: Acrobat, open: true }, { I: Mountain, open: true },
];

const Line = ({ w = 24, h = 24, d, sw = 2, color = '#fff' }) => (
  <svg width={w} height={h} viewBox={`0 0 ${w} ${h}`} fill="none" stroke={color} strokeWidth={sw}><path d={d} /></svg>
);

export default function App() {
  return (
    <Screen>
      <Global />
      <TabStrip>
        <TabSearch><Line w={12} h={8} d="M1.500 1.500 6 6l4.500-4.500" /></TabSearch>
        {tabs.map(([Icon, title, bare], i) => (
          <Tab key={i} $bare={bare}>
            <Favicon><Icon /></Favicon>
            <TabTitle>{title}</TabTitle>
          </Tab>
        ))}
        <ActiveTab>
          <TabTitle>U</TabTitle>
          <Line w={10} h={10} d="M1 1l8 8M9 1l-8 8" sw={1.8} />
        </ActiveTab>
        <NewTab><Line w={14} h={14} d="M7 0v14M0 7h14" /></NewTab>
        <WindowButtons>
          <Line w={14} h={14} d="M1 7.500h12" sw={1} />
          <Line w={14} h={14} d="M.5 3.500h8.500v10H.5zM3.500 1.500h6.500q2 0 2 2V11" sw={1.1} />
          <Line w={14} h={14} d="M.5.5l13 13M13.500.5l-13 13" sw={1.2} />
        </WindowButtons>
      </TabStrip>
      <ToolbarBack>
        <Toolbar>
          <NavButtons>
            <Line d="M19 12H5M11.500 5.500 5 12l6.500 6.500" />
            <Line d="M4 12h15M12.500 5.500 19 12l-6.500 6.500" color="#7f9fca" />
            <Line d="M18.200 7.500A7.200 7.200 0 1 0 19 13M19 4v6h-6" />
          </NavButtons>
          <AddressBar>
            <InfoBadge>
              <svg width="18" height="18" viewBox="0 0 18 18"><circle cx="9" cy="9" r="7.700" fill="none" stroke="#fff" strokeWidth="1.800" /><path d="M9 8v5M9 5v1.600" stroke="#fff" strokeWidth="1.800" /></svg>
            </InfoBadge>
            <Url><b>127.0.0.1</b>:5000/dashboard/</Url>
            <AddressActions><MdOutlineVpnKey size={24} /><MdStarOutline size={24} /></AddressActions>
          </AddressBar>
          <ToolbarActions>
            <svg width="22" height="22" viewBox="0 0 22 22"><path d="M2.500 3.500h14q1 0 1 1v15q0 1-1 1h-14q-1 0-1-1v-4q3.500-.5 3.500-3.300T1.500 9V4.500q0-1 1-1z" fill="none" stroke="#fff" strokeWidth="2.200" strokeLinejoin="round" /><path d="M6.800 3a2.700 2.700 0 0 1 5.400 0zM18 9.300a2.700 2.700 0 0 1 0 5.400z" fill="#fff" /></svg>
            <Rule />
            <Line w={22} h={22} d="M11 1v12M5.500 8l5.500 5.500L16.500 8M1.500 15v4.500h19V15" sw={2.3} />
            <Avatar>P</Avatar>
            <svg width="4" height="18"><circle cx="2" cy="2" r="2" fill="#fff" /><circle cx="2" cy="9" r="2" fill="#fff" /><circle cx="2" cy="16" r="2" fill="#fff" /></svg>
          </ToolbarActions>
        </Toolbar>
      </ToolbarBack>
      <Viewport>
        <Page>
          <Card>
            <Heading>Find a Ride</Heading>
            <Label $top={23}>Start Location:</Label>
            <Field $h={33} placeholder="Enter start location or use c" />
            <Button $top={1} $w={321} $h={56}>USE CURRENT LOCATION</Button>
            <Label $top={68}>End Location:</Label>
            <Field $h={32} placeholder="Enter end location" />
            <Button $top={36} $w={174} $h={57} $primary>FIND RIDE</Button>
            <MapBox>
              <MapDrawing />
              <MapControls>
                <MapTypes>
                  <MapType $w={86} $on>Map</MapType>
                  <MapType $w={124}>Satellite</MapType>
                </MapTypes>
                <Fullscreen><Line w={24} h={23} d="M1.500 8V1.500H8M15 1.500h6.500V8M21.500 15v6.500H15M8 21.500H1.500V15" sw={3} color="#666" /></Fullscreen>
              </MapControls>
            </MapBox>
          </Card>
        </Page>
        <Scrollbar>
          <svg width="10" height="6"><path d="M0 6l5-6 5 6z" fill="#505050" /></svg>
          <Thumb />
          <svg width="10" height="6"><path d="M0 0l5 6 5-6z" fill="#505050" /></svg>
        </Scrollbar>
      </Viewport>
      <Taskbar>
        <Weather><WeatherIcon /><Badge $x={40} $bg="#ff98a2">1</Badge></Weather>
        <AppSlot><Windows /></AppSlot>
        <Search>
          <svg width="19" height="20" viewBox="0 0 19 20" fill="none" stroke="#eee" strokeWidth="2"><circle cx="8" cy="8" r="7" /><path d="M13 13.500l5 5.500" /></svg>
          <span>Search</span>
          <Desk />
        </Search>
        {apps.map(({ I, open, active, badge }, i) => (
          <AppSlot key={i} $open={open} $active={active}>
            <Plate $on={active}><I /></Plate>
            {badge && <Badge $x={28.5} $bg={badge[1]} $fg={badge[2]}>{badge[0]}</Badge>}
          </AppSlot>
        ))}
        <Tray>
          <TrayItem $ml={2}><Line w={14} h={9} d="M1 8l6-6 6 6" sw={1.8} /></TrayItem>
          <TrayItem $ml={24}>
            <svg width="18" height="18" viewBox="0 0 18 18"><path d="M1 3l3.500-3L8 3 4.500 5.500zM10 3l3.500-3L17 3l-3.500 2.500zM10 9l3.500-3L17 9l-3.500 2.500zM11 13l2-1 1 1-2 2z" fill="#fff" /><rect y="7" width="9.500" height="11" rx="2" fill="#d80f2c" /><text x="4.800" y="15.500" textAnchor="middle" fontFamily="Open Sans, sans-serif" fontSize="8" fontWeight="700" fill="#fff">5</text></svg>
          </TrayItem>
          <TrayText $w={40} $ml={19} $mr={17} $align="center">ENG<br />IN</TrayText>
          <svg width="20" height="16" viewBox="0 0 20 16" fill="none" stroke="#fff" strokeWidth="1.500"><path d="M1 6q9-9 18 0M4 9q6-6 12 0M7 11.500q3-3 6 0" /><circle cx="10" cy="14" r="1.300" fill="#fff" /></svg>
          <TrayItem $ml={10}>
            <svg width="20" height="18" viewBox="0 0 20 18" fill="none" stroke="#fff" strokeWidth="1.400"><path d="M1 6v6h3l4 4V2L4 6zM11 6q2 3 0 6M13.500 4q4 5 0 10M16 2q5.500 7 0 14" /></svg>
          </TrayItem>
          <TrayItem $ml={10}>
            <svg width="20" height="18" viewBox="0 0 20 18"><rect x="1" y="3.500" width="16.500" height="12" rx="2.500" fill="none" stroke="#fff" strokeWidth="1.300" /><rect x="3" y="5.500" width="12.500" height="8" rx="1" fill="#fff" /><path d="M19 7.500v4" stroke="#fff" strokeWidth="1.800" /><path d="M3.500-.5-.5 5.500H2.500V10L7.500 4H4.800V-.5z" fill="#fff" stroke="#1c1c1c" strokeWidth="1" /></svg>
          </TrayItem>
          <TrayText $w={90} $ml={8} $mr={11} $ls={-0.25} $align="right">14:50<br />16-06-2024</TrayText>
          <svg width="17" height="20" viewBox="0 0 17 20"><path d="M8.500 0C4 0 2 3 2 7v4L0 15v1h17v-1l-2-4V7c0-4-2-7-6.500-7zM5.500 17.300h6q-1 2.400-3 2.400t-3-2.400z" fill="#edb7f2" /></svg>
          <TrayItem $ml={22}><Copilot /></TrayItem>
        </Tray>
      </Taskbar>
    </Screen>
  );
}
